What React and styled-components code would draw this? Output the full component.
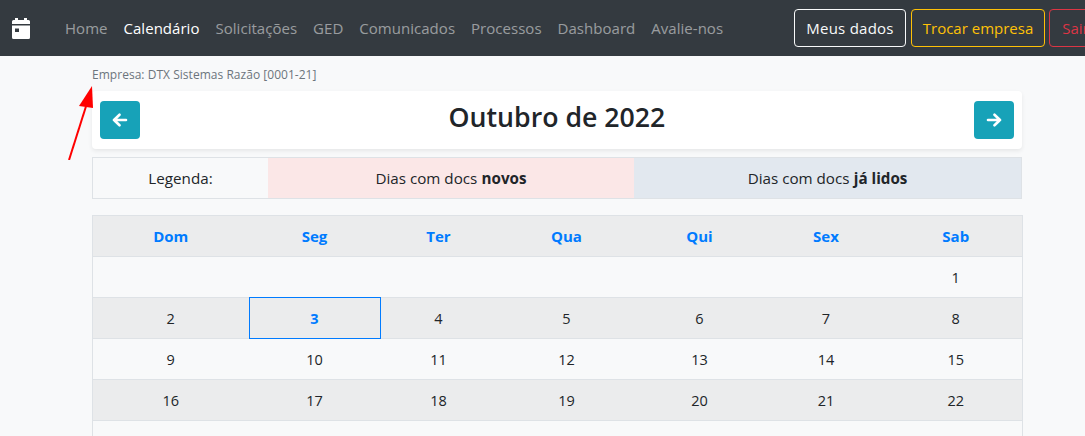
import React from 'react';
import styled, { createGlobalStyle, css } from 'styled-components';

const GlobalStyle = createGlobalStyle`
  html, body {
    margin: 0;
    padding: 0;
    height: 436px;
    overflow: hidden;
    background: #f8f9fa;
  }
  body {
    font-family: "Open Sans", "Noto Sans", sans-serif;
    font-size: 16px;
    color: #212529;
  }
`;

const Page = styled.div`
  position: relative;
  width: 1114px;
`;

const Navbar = styled.nav`
  display: flex;
  align-items: center;
  height: 56px;
  padding: 0 12px;
  background: #343a40;
  box-sizing: border-box;
`;

const Brand = styled.a`
  display: flex;
  width: 18px;
  margin-right: 35px;
  color: #fff;
`;

const NavList = styled.ul`
  display: flex;
  flex: 1;
  gap: 16px;
  margin: 0;
  padding: 0;
  list-style: none;
`;

const NavItem = styled.li`
  font-size: 15px;
  letter-spacing: 0.03px;
  color: ${(p) => (p.$active ? '#fff' : 'rgba(255, 255, 255, 0.5)')};
`;

const NavActions = styled.div`
  display: flex;
  gap: 5px;
`;

const OutlineButton = styled.button`
  width: ${(p) => p.$width}px;
  height: 38px;
  margin-left: ${(p) => p.$nudge || 0}px;
  padding: 0;
  font-family: inherit;
  font-size: 15px;
  letter-spacing: ${(p) => p.$track || 0}px;
  color: ${(p) => p.$color};
  background: transparent;
  border: 1px solid ${(p) => p.$color};
  border-radius: 4px;
  white-space: nowrap;
`;

const Container = styled.main`
  width: 930px;
  margin: 0 auto;
`;

const CompanyLine = styled.p`
  margin: 0;
  padding-top: 10px;
  height: 35px;
  box-sizing: border-box;
  font-size: 12px;
  line-height: 17px;
  letter-spacing: 0.03px;
  color: #6c757d;
`;

const MonthCard = styled.section`
  display: flex;
  align-items: center;
  justify-content: space-between;
  height: 58px;
  padding: 0 8px;
  margin-bottom: 8px;
  box-sizing: border-box;
  background: #fff;
  border-radius: 4px;
  box-shadow: 0 2px 4px rgba(0, 0, 0, 0.075);
`;

const MonthTitle = styled.h1`
  margin: 0 0 6px;
  font-size: 26.7px;
  font-weight: 600;
  line-height: 1.2;
  color: #212529;
`;

const ArrowButton = styled.button`
  display: flex;
  align-items: center;
  justify-content: center;
  width: 40px;
  height: 38px;
  padding: 0;
  color: #fff;
  background: #17a2b8;
  border: 0;
  border-radius: 4px;
`;

const Legend = styled.div`
  display: grid;
  grid-template-columns: 175px 366px 1fr;
  height: 42px;
  margin-bottom: 16px;
  box-sizing: border-box;
  border: 1px solid #dee2e6;
`;

const LegendCell = styled.div`
  display: flex;
  align-items: center;
  justify-content: center;
  gap: 0.28em;
  font-size: 15.2px;
  background: ${(p) => p.$bg || 'transparent'};
`;

const Table = styled.table`
  width: 930px;
  table-layout: fixed;
  border-collapse: collapse;
`;

const HeadCell = styled.th`
  height: 40px;
  padding: 0;
  font-size: 15px;
  font-weight: 700;
  color: #007bff;
  background: rgba(0, 0, 0, 0.05);
  border-style: solid;
  border-color: #dee2e6;
  border-width: 1px 0;
  &:first-child { border-left-width: 1px; }
  &:last-child { border-right-width: 1px; }
`;

const DayRow = styled.tr`
  background: ${(p) => (p.$striped ? 'rgba(0, 0, 0, 0.05)' : 'transparent')};
`;

const todayFrame = css`
  position: relative;
  &::after {
    content: '';
    position: absolute;
    inset: -1px 0;
    border: 1px solid #007bff;
  }
`;

const DayCell = styled.td`
  height: 41px;
  padding: 0;
  box-sizing: border-box;
  text-align: center;
  font-size: 14.5px;
  font-weight: ${(p) => (p.$today ? 700 : 400)};
  color: ${(p) => (p.$today ? '#007bff' : '#212529')};
  border-style: solid;
  border-color: #dee2e6;
  border-width: 1px 0;
  &:first-child { border-left-width: 1px; }
  &:last-child { border-right-width: 1px; }
  ${(p) => p.$today && todayFrame}
`;

const Annotation = styled.svg`
  position: absolute;
  left: 60px;
  top: 80px;
  pointer-events: none;
`;

const navLinks = ['Home', 'Calendário', 'Solicitações', 'GED', 'Comunicados', 'Processos', 'Dashboard', 'Avalie-nos'];
const weekDays = ['Dom', 'Seg', 'Ter', 'Qua', 'Qui', 'Sex', 'Sab'];
const columnWidths = [156, 132, 116, 140, 126, 127, 133];
const weeks = [
  ['', '', '', '', '', '', 1],
  [2, 3, 4, 5, 6, 7, 8],
  [9, 10, 11, 12, 13, 14, 15],
  [16, 17, 18, 19, 20, 21, 22],
  ['', '', '', '', '', '', ''],
];

function CalendarIcon() {
  return (
    <svg width="18" height="21" viewBox="0 0 18 21" fill="currentColor">
      <path d="M3 0h3v3H3zM12 0h3v3h-3z" />
      <path d="M1.5 2H16.5A1.5 1.5 0 0 1 18 3.5V6H0V3.5A1.5 1.5 0 0 1 1.5 2Z" />
      <path fillRule="evenodd" d="M0 7.5H18V19.5A1.5 1.5 0 0 1 16.5 21H1.5A1.5 1.5 0 0 1 0 19.5ZM3 10.5V14H7V10.5Z" />
    </svg>
  );
}

function Arrow({ flip }) {
  return (
    <svg width="16" height="14" viewBox="0 0 16 14" fill="none" stroke="currentColor" strokeWidth="2.6" strokeLinecap="round" strokeLinejoin="round">
      {flip ? <path d="M2 7H14M8.5 1.7L14 7L8.5 12.3" /> : <path d="M14 7H2M7.5 1.7L2 7L7.5 12.3" />}
    </svg>
  );
}

export default function App() {
  return (
    <Page>
      <GlobalStyle />
      <Navbar>
        <Brand><CalendarIcon /></Brand>
        <NavList>
          {navLinks.map((link) => (
            <NavItem key={link} $active={link === 'Calendário'}>{link}</NavItem>
          ))}
        </NavList>
        <NavActions>
          <OutlineButton $color="#f8f9fa" $width={112} $track={0.25}>Meus dados</OutlineButton>
          <OutlineButton $color="#ffc107" $width={134}>Trocar empresa</OutlineButton>
          <OutlineButton $color="#dc3545" $width={53} $nudge={-1}>Sair</OutlineButton>
        </NavActions>
      </Navbar>
      <Container>
        <CompanyLine>Empresa: DTX Sistemas Razão [0001-21]</CompanyLine>
        <MonthCard>
          <ArrowButton aria-label="Mês anterior"><Arrow /></ArrowButton>
          <MonthTitle>Outubro de 2022</MonthTitle>
          <ArrowButton aria-label="Próximo mês"><Arrow flip /></ArrowButton>
        </MonthCard>
        <Legend>
          <LegendCell>Legenda:</LegendCell>
          <LegendCell $bg="#fbe7e7"><span>Dias com docs</span> <b>novos</b></LegendCell>
          <LegendCell $bg="#e2e8ef"><span>Dias com docs</span> <b>já lidos</b></LegendCell>
        </Legend>
        <Table>
          <colgroup>
            {columnWidths.map((w, i) => <col key={i} width={w} />)}
          </colgroup>
          <thead>
            <tr>
              {weekDays.map((d) => <HeadCell key={d}>{d}</HeadCell>)}
            </tr>
          </thead>
          <tbody>
            {weeks.map((week, i) => (
              <DayRow key={i} $striped={i % 2 === 1}>
                {week.map((day, j) => (
                  <DayCell key={j} $today={day === 3}>{day}</DayCell>
                ))}
              </DayRow>
            ))}
          </tbody>
        </Table>
      </Container>
      <Annotation width="40" height="80" viewBox="0 0 40 80">
        <line x1="9" y1="80" x2="28" y2="20" stroke="#ff0000" strokeWidth="2" />
        <polygon points="32,6 19,26 33,28" fill="#ff0000" />
      </Annotation>
    </Page>
  );
}
